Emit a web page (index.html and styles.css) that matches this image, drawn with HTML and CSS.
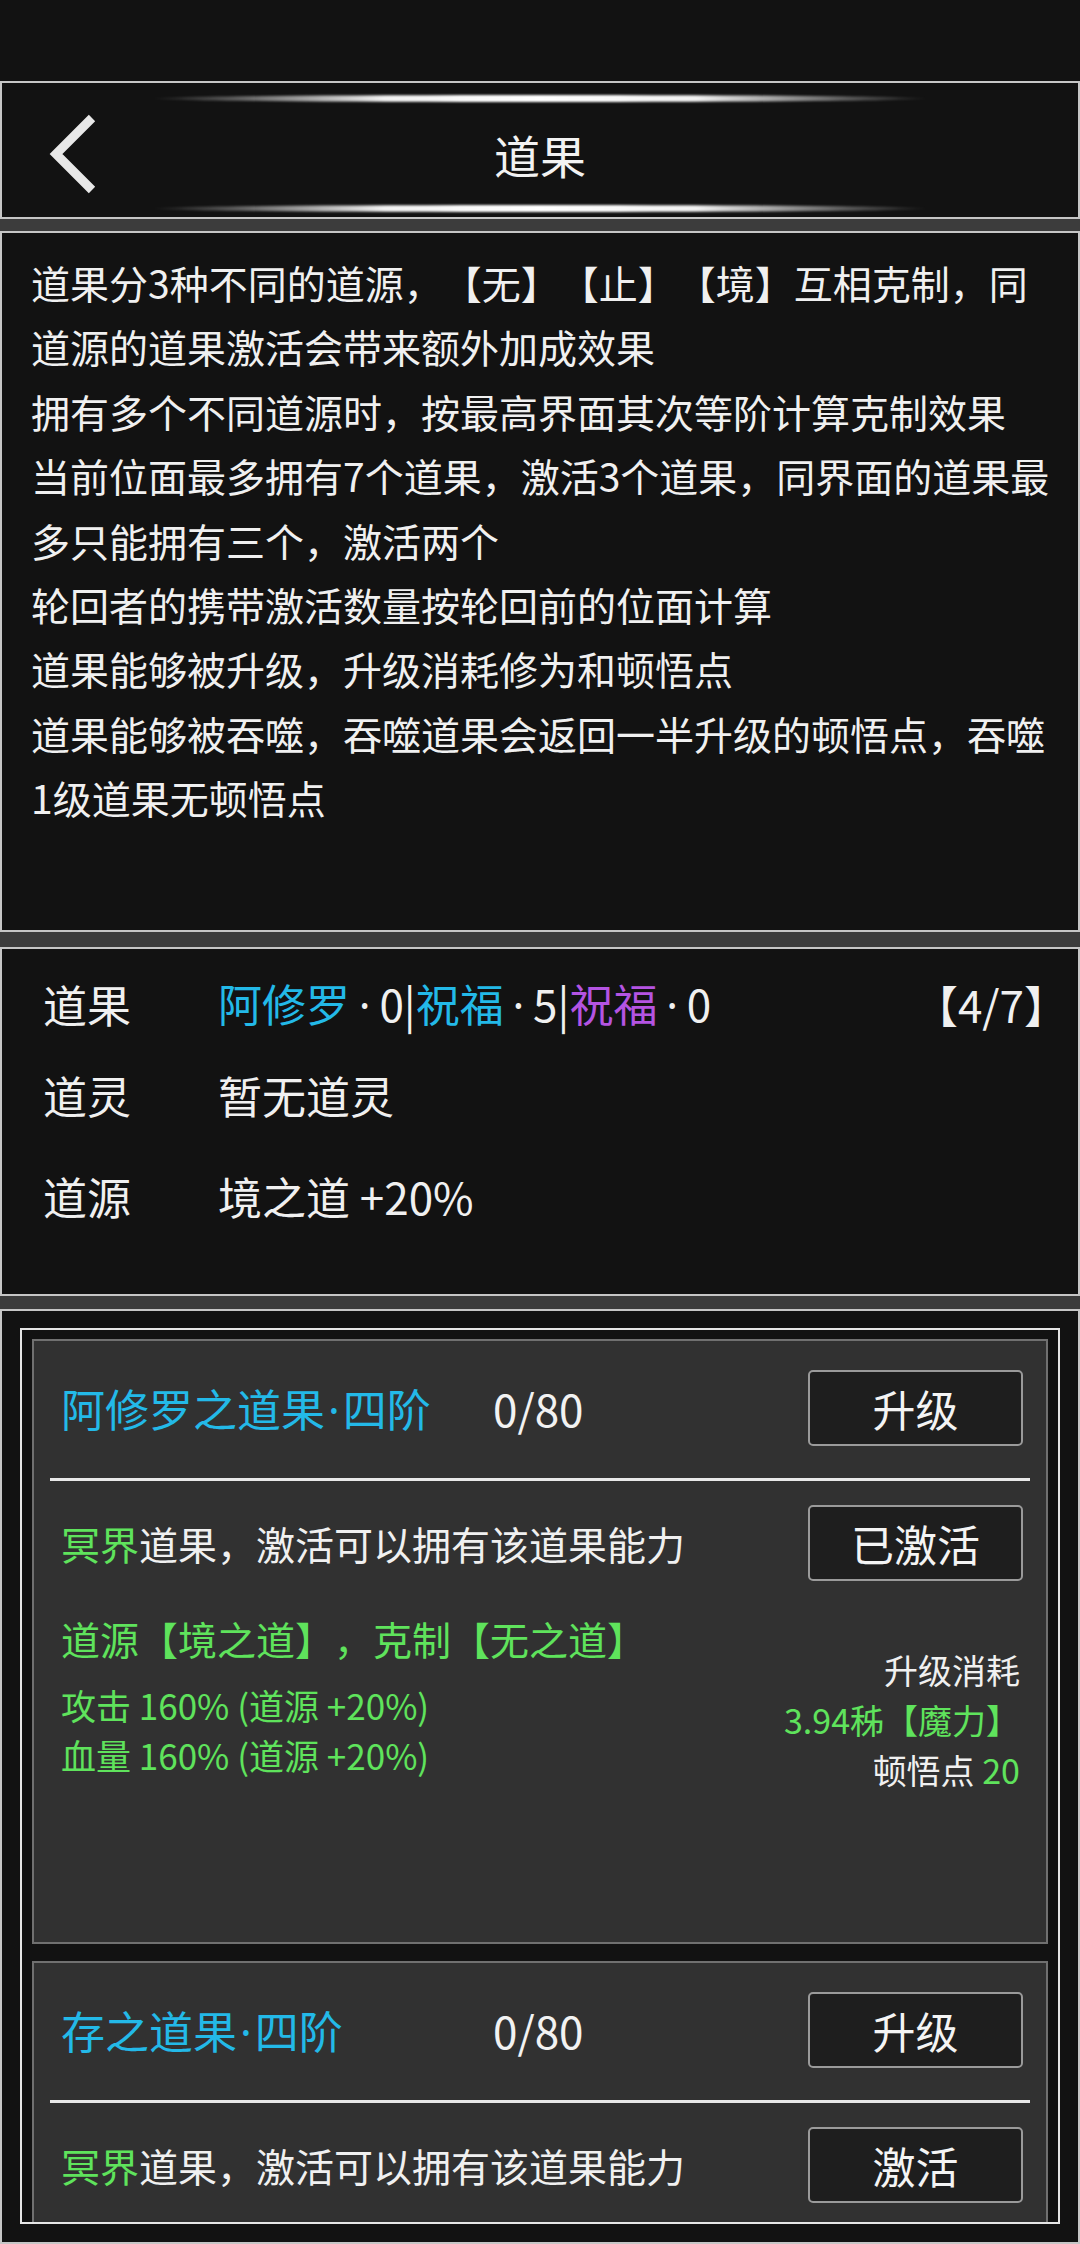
FILE: index.html
```html
<!DOCTYPE html>
<html lang="zh-CN">
<head>
<meta charset="utf-8">
<title>道果</title>
<link rel="stylesheet" href="styles.css">
</head>
<body>
<div class="statusbar"></div>

<header class="box header">
  <div class="glow"></div>
  <div class="title-row">
    <div class="back">
      <svg width="60" height="84" viewBox="0 0 60 84"><path d="M50 6 L14 42 L50 78" fill="none" stroke="#e8e8e8" stroke-width="9" stroke-linejoin="miter"/></svg>
    </div>
    <h1 class="title">道果</h1>
    <div></div>
  </div>
  <div class="glow"></div>
</header>

<section class="box desc">
  <p>道果分3种不同的道源，【无】【止】【境】互相克制，同<br>道源的道果激活会带来额外加成效果</p>
  <p>拥有多个不同道源时，按最高界面其次等阶计算克制效果</p>
  <p>当前位面最多拥有7个道果，激活3个道果，同界面的道果最<br>多只能拥有三个，激活两个</p>
  <p>轮回者的携带激活数量按轮回前的位面计算</p>
  <p>道果能够被升级，升级消耗修为和顿悟点</p>
  <p>道果能够被吞噬，吞噬道果会返回一半升级的顿悟点，吞噬<br>1级道果无顿悟点</p>
</section>

<section class="box info">
  <div class="info-row">
    <span class="label">道果</span>
    <span class="value"><span class="blue">阿修罗</span><span class="dot">·</span>0|<span class="blue">祝福</span><span class="dot">·</span>5|<span class="purple">祝福</span><span class="dot">·</span>0</span>
    <span class="count">【4/7】</span>
  </div>
  <div class="info-row">
    <span class="label">道灵</span>
    <span class="value">暂无道灵</span>
  </div>
  <div class="info-row last">
    <span class="label">道源</span>
    <span class="value">境之道 +20%</span>
  </div>
</section>

<section class="box list">
  <div class="panel">
    <div class="card">
      <div class="card-head">
        <span class="card-title">阿修罗之道果<span class="mdot">·</span>四阶</span>
        <span class="card-progress">0/80</span>
        <button class="btn">升级</button>
      </div>
      <div class="divider"></div>
      <div class="card-row">
        <span class="card-text"><span class="green">冥界</span>道果，激活可以拥有该道果能力</span>
        <button class="btn">已激活</button>
      </div>
      <div class="card-detail">
        <div class="detail-left">
          <div class="source">道源【境之道】，克制【无之道】</div>
          <div class="stat first">攻击 160% (道源 +20%)</div>
          <div class="stat">血量 160% (道源 +20%)</div>
        </div>
        <div class="detail-right">
          <div>升级消耗</div>
          <div class="green">3.94秭【魔力】</div>
          <div>顿悟点 <span class="green">20</span></div>
        </div>
      </div>
    </div>

    <div class="card">
      <div class="card-head">
        <span class="card-title">存之道果<span class="mdot">·</span>四阶</span>
        <span class="card-progress">0/80</span>
        <button class="btn">升级</button>
      </div>
      <div class="divider"></div>
      <div class="card-row">
        <span class="card-text"><span class="green">冥界</span>道果，激活可以拥有该道果能力</span>
        <button class="btn">激活</button>
      </div>
    </div>
  </div>
</section>
</body>
</html>
```

FILE: styles.css
```css
* { box-sizing: border-box; }

html, body {
  margin: 0;
  padding: 0;
}

body {
  width: 1080px;
  background: #3c3c3c;
  color: #f0f0f0;
  font-family: "Noto Sans CJK SC", "Noto Sans", sans-serif;
  text-spacing-trim: space-all;
}

.statusbar {
  height: 81px;
  background: #121212;
}

.box {
  width: 1080px;
  background: #121212;
  border: 2px solid #c6c6c6;
}

/* header */
.header {
  height: 138px;
  padding-top: 12px;
}

.glow {
  width: 780px;
  height: 7px;
  margin: 0 auto;
  border-radius: 50%;
  background: linear-gradient(90deg, rgba(255,255,255,0) 0%, rgba(255,255,255,0.35) 12%, rgba(255,255,255,0.95) 30%, #ffffff 50%, rgba(255,255,255,0.95) 70%, rgba(255,255,255,0.35) 88%, rgba(255,255,255,0) 100%);
  filter: blur(1.2px);
}

.title-row {
  height: 103px;
  display: grid;
  grid-template-columns: 1fr auto 1fr;
  align-items: center;
}

.back {
  padding-left: 40px;
  display: flex;
  align-items: center;
}

.back svg { display: block; }

.title {
  margin: 0;
  font-size: 46px;
  font-weight: 400;
  color: #f2f2f2;
  line-height: 1;
}

/* description */
.desc {
  margin-top: 12px;
  height: 701px;
  padding: 17px 20px 0 29px;
  font-size: 39px;
  line-height: 64.4px;
  white-space: nowrap;
}

.desc p { margin: 0; }

/* info */
.info {
  margin-top: 15px;
  height: 349px;
  padding: 25px 10px 0 41px;
  font-size: 44px;
}

.info-row {
  display: flex;
  align-items: center;
  height: 60px;
  line-height: 60px;
  white-space: nowrap;
}

.info-row + .info-row { margin-top: 31px; }
.info-row.last { margin-top: 41px; }

.label { width: 175px; flex: none; }

.value { flex: 1; }

.dot {
  font-family: "Noto Sans", sans-serif;
  padding: 0 0.2em;
}

.count { flex: none; }

.blue { color: #23b9e8; }
.purple { color: #b454e2; }
.green { color: #5fe35c; }

/* list */
.list {
  margin-top: 13px;
  height: 935px;
  padding: 17px 18px 0;
}

.panel {
  height: 896px;
  border: 2px solid #e6e6e6;
  padding: 9px 10px 0;
  overflow: hidden;
}

.card {
  height: 605px;
  background: #313131;
  border: 2px solid #707070;
  padding: 29px 16px 0;
}

.card + .card { margin-top: 17px; }

.card-head {
  display: flex;
  align-items: center;
  padding: 0 7px 0 11px;
  height: 76px;
}

.card-title {
  width: 432px;
  flex: none;
  font-size: 44px;
  color: #23b9e8;
  white-space: nowrap;
}

.mdot {
  font-family: "Noto Sans", sans-serif;
  padding: 0 3px;
}

.card-progress {
  flex: 1;
  font-size: 44px;
  color: #f2f2f2;
}

.btn {
  width: 215px;
  height: 76px;
  flex: none;
  background: #1e1e1e;
  border: 2px solid #9a9a9a;
  border-radius: 5px;
  color: #f4f4f4;
  font-family: "Noto Sans CJK SC", "Noto Sans", sans-serif;
  font-size: 43px;
  line-height: 1;
  padding: 0;
  margin-left: auto;
}

.divider {
  height: 3px;
  margin-top: 32px;
  background: #e8e8e8;
}

.card-row {
  display: flex;
  align-items: center;
  justify-content: space-between;
  margin-top: 24px;
  padding: 0 7px 0 11px;
  height: 76px;
}

.card-text {
  font-size: 39px;
  color: #f0f0f0;
  white-space: nowrap;
}

.card-detail {
  display: flex;
  justify-content: space-between;
  margin-top: 32px;
  padding: 0 10px 0 11px;
  white-space: nowrap;
}

.source {
  font-size: 39px;
  line-height: 50px;
  color: #5fe35c;
}

.stat {
  font-size: 35px;
  line-height: 50px;
  color: #5fe35c;
}

.stat.first { margin-top: 17px; }

.detail-right {
  margin-top: 32px;
  text-align: right;
  font-size: 34px;
  line-height: 50px;
  color: #f0f0f0;
}
```
